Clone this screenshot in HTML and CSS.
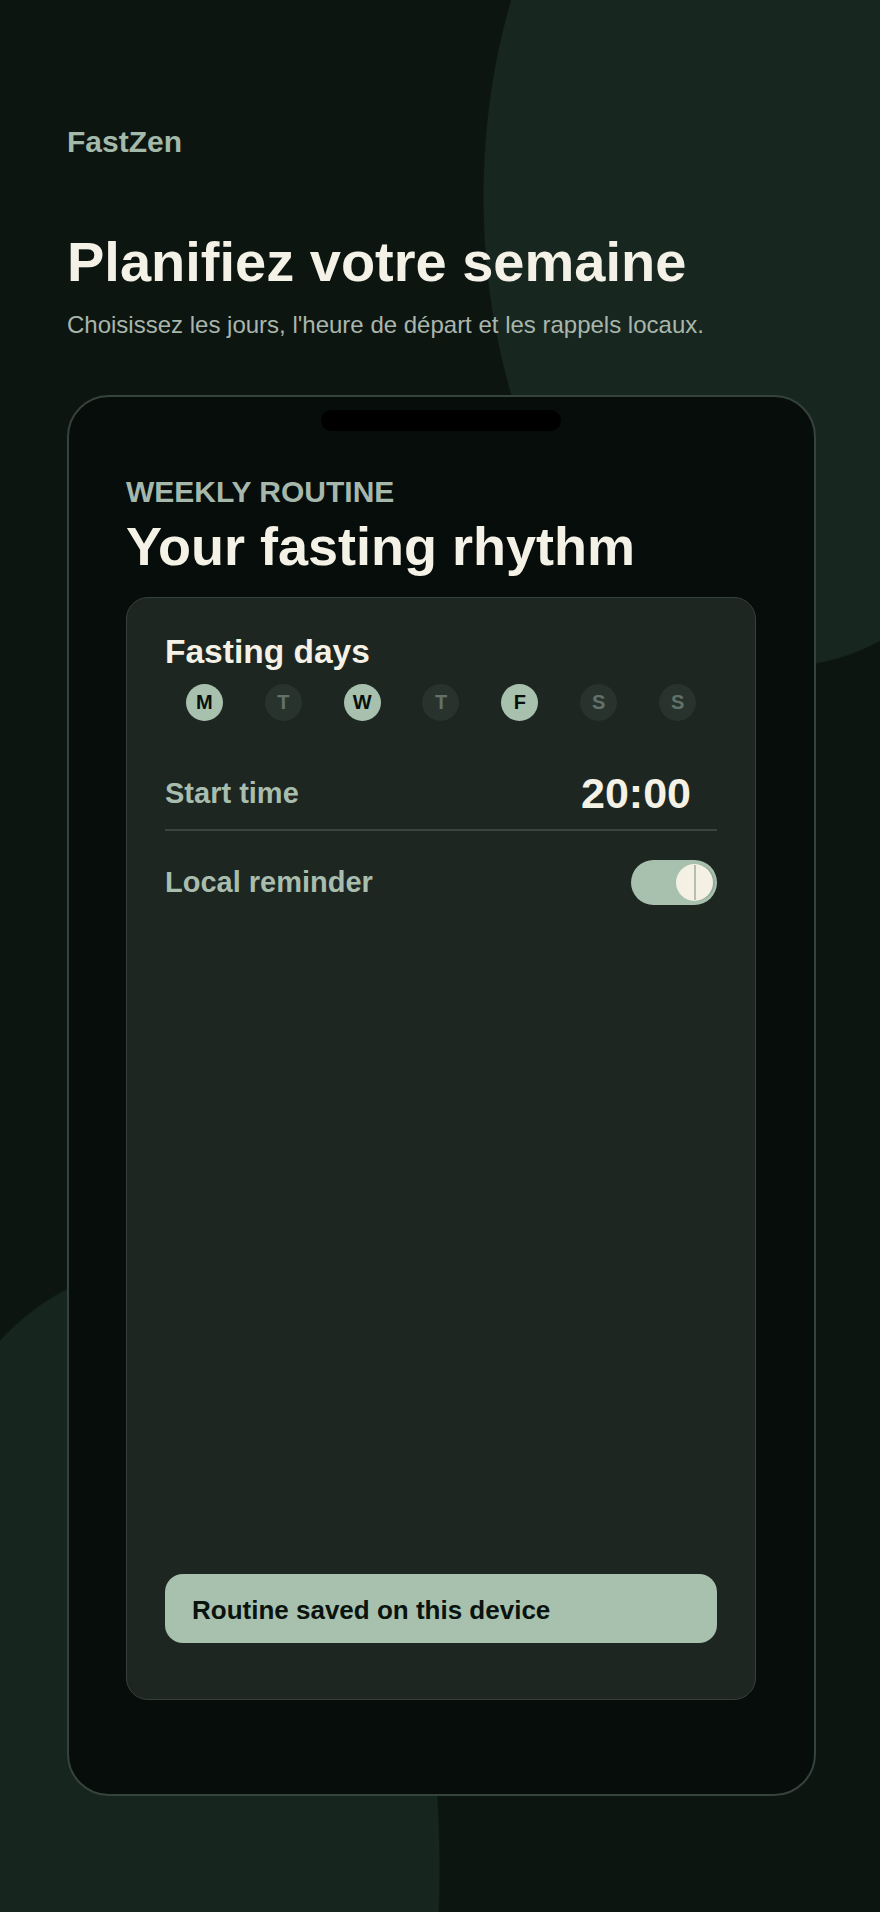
FILE: index.html
```html
<!DOCTYPE html>
<html lang="fr">
<head>
<meta charset="utf-8">
<title>FastZen</title>
<link rel="stylesheet" href="styles.css">
</head>
<body>
<div class="page">
  <div class="brand">FastZen</div>
  <h1 class="headline">Planifiez votre semaine</h1>
  <p class="lede">Choisissez les jours, l'heure de départ et les rappels locaux.</p>

  <div class="phone">
    <div class="notch"></div>
    <div class="eyebrow">WEEKLY ROUTINE</div>
    <h2 class="screen-title">Your fasting rhythm</h2>

    <section class="card">
      <h3 class="card-title">Fasting days</h3>
      <div class="days">
        <span class="day on">M</span>
        <span class="day">T</span>
        <span class="day on">W</span>
        <span class="day">T</span>
        <span class="day on">F</span>
        <span class="day">S</span>
        <span class="day">S</span>
      </div>

      <div class="row time-row">
        <span class="label">Start time</span>
        <span class="time">20:00</span>
      </div>

      <div class="row reminder-row">
        <span class="label">Local reminder</span>
        <span class="toggle"><span class="knob"></span></span>
      </div>

      <div class="toast">Routine saved on this device</div>
    </section>
  </div>
</div>
</body>
</html>
```

FILE: styles.css
```css
* { box-sizing: border-box; }

html, body {
  margin: 0;
  padding: 0;
  background: #0d1511;
}

body {
  font-family: "Liberation Sans", Arial, sans-serif;
}

.page {
  width: 880px;
  min-height: 1912px;
  padding: 124px 64px 0 67px;
  background:
    radial-gradient(ellipse 300px 470px at 783px 197px, #172720 99.6%, rgba(23,39,32,0) 100%),
    radial-gradient(ellipse 300px 600px at 140px 1870px, #16251e 99.6%, rgba(22,37,30,0) 100%),
    #0d1511;
}

.brand {
  font-size: 30px;
  line-height: 36px;
  font-weight: 700;
  color: #a3b9a9;
}

.headline {
  margin: 70px 0 0;
  font-size: 56px;
  line-height: 64px;
  font-weight: 700;
  color: #f4f1e6;
}

.lede {
  margin: 14px 0 0;
  font-size: 24px;
  line-height: 34px;
  color: #a9b6ac;
}

.phone {
  margin-top: 53px;
  height: 1401px;
  border: 2px solid #36423c;
  border-radius: 42px;
  background: #070d0a;
  padding: 0 58px 94px 57px;
  display: flex;
  flex-direction: column;
}

.notch {
  align-self: center;
  margin-top: 13px;
  width: 240px;
  height: 21px;
  border-radius: 11px;
  background: #000;
}

.eyebrow {
  margin-top: 43px;
  font-size: 30px;
  line-height: 35px;
  font-weight: 700;
  color: #a6b7ab;
}

.screen-title {
  margin: 7px 0 0;
  font-size: 54px;
  line-height: 61px;
  font-weight: 700;
  color: #f4f1e6;
}

.card {
  margin-top: 20px;
  flex: 1;
  display: flex;
  flex-direction: column;
  background: #1d2621;
  border: 1px solid #36403b;
  border-radius: 22px;
  padding: 34px 38px 56px;
}

.card-title {
  margin: 0;
  font-size: 33.5px;
  line-height: 40px;
  font-weight: 700;
  color: #f4f1e6;
}

.days {
  margin-top: 12px;
  display: grid;
  grid-template-columns: repeat(7, 1fr);
  justify-items: center;
}

.day {
  width: 37px;
  height: 37px;
  border-radius: 50%;
  background: #28332e;
  color: #627169;
  font-size: 20px;
  font-weight: 700;
  display: flex;
  align-items: center;
  justify-content: center;
}

.day.on {
  background: #a8c1ae;
  color: #08100c;
}

.row {
  display: flex;
  align-items: center;
  justify-content: space-between;
}

.label {
  font-size: 29px;
  font-weight: 700;
  color: #a8bdae;
}

.time-row {
  margin-top: 48px;
  padding-bottom: 11px;
  border-bottom: 2px solid #3a4540;
}

.time {
  font-size: 43px;
  line-height: 49px;
  font-weight: 700;
  color: #f4f1e6;
  margin-right: 26px;
}

.reminder-row {
  margin-top: 29px;
}

.toggle {
  width: 86px;
  height: 45px;
  border-radius: 23px;
  background: #a8c1ae;
  padding: 4px;
  display: flex;
  align-items: center;
  justify-content: flex-end;
}

.knob {
  position: relative;
  width: 37px;
  height: 37px;
  border-radius: 50%;
  background: #f4f1e4;
  box-shadow: 2px 0 0 #93ab99;
}

.knob::after {
  content: "";
  position: absolute;
  left: 18px;
  top: 1px;
  bottom: 1px;
  width: 1.5px;
  background: #b8bdb2;
}

.toast {
  margin-top: auto;
  height: 69px;
  border-radius: 18px;
  background: #a8c1ae;
  padding: 4px 27px 0;
  display: flex;
  align-items: center;
  font-size: 26px;
  font-weight: 700;
  color: #0a130e;
}
```
